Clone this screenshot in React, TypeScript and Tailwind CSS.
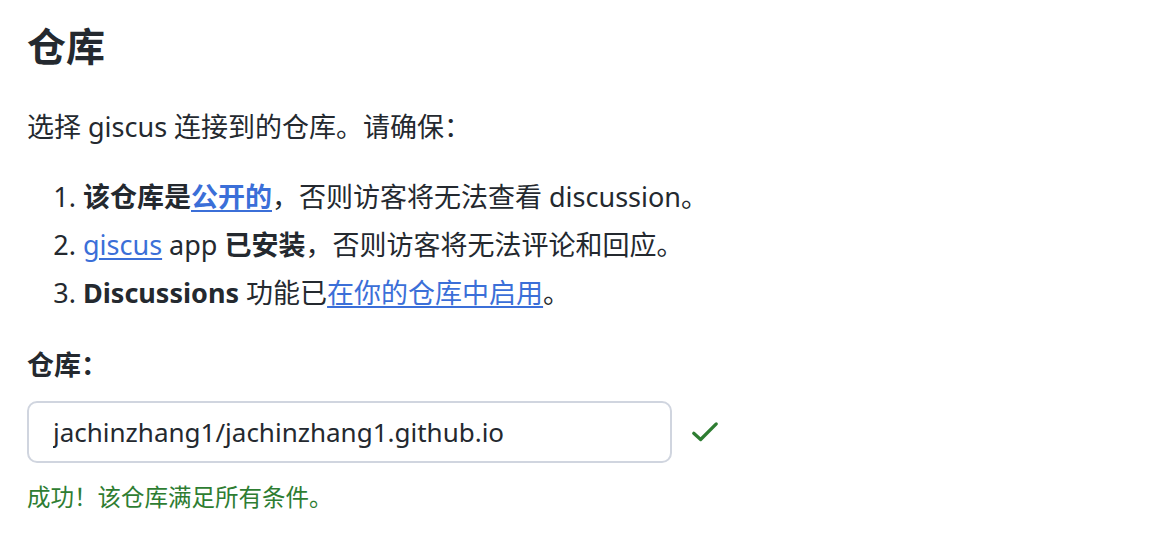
import React from 'react';

const font = { fontFamily: '"Noto Sans", "Noto Sans CJK SC", sans-serif' };

const A = ({ children, bold }: { children: React.ReactNode; bold?: boolean }) => (
  <a href="#" className={`text-[#3b6fd8] underline underline-offset-[3px] ${bold ? 'font-bold' : ''}`}>
    {children}
  </a>
);

export default function App() {
  return (
    <div className="min-h-screen bg-white text-[#24292f] px-[27px] pt-[20px]" style={font}>
      <h2 className="text-[39px] font-bold leading-[52px]">仓库</h2>

      <p className="text-[27px] leading-[40px] mt-[35px]">选择 giscus 连接到的仓库。请确保：</p>

      <ol className="list-decimal pl-[30px] ml-[26px] mt-[30px] text-[27px] leading-[40px] flex flex-col gap-[8px]">
        <li>
          <strong>该仓库是<A bold>公开的</A></strong>，否则访客将无法查看 discussion。
        </li>
        <li>
          <A>giscus</A> app <strong>已安装</strong>，否则访客将无法评论和回应。
        </li>
        <li>
          <strong>Discussions</strong> 功能已<A>在你的仓库中启用</A>。
        </li>
      </ol>

      <div className="mt-[32px]">
        <label className="block text-[27px] font-bold leading-[40px]">仓库：</label>
        <div className="flex items-center gap-[18px] mt-[16px]">
          <input
            readOnly
            value="jachinzhang1/jachinzhang1.github.io"
            className="w-[645px] h-[62px] border-2 border-[#d0d5df] rounded-[10px] px-[24px] text-[26px] text-[#24292f] outline-none"
            style={font}
          />
          <svg width="30" height="30" viewBox="0 0 24 24" fill="none" stroke="#2e7d32" strokeWidth="2.6" strokeLinecap="round" strokeLinejoin="round">
            <path d="M3 13l5.5 5L21 5.5" />
          </svg>
        </div>
        <p className="text-[23.5px] leading-[32px] text-[#2e7d32] mt-[18px]">成功！该仓库满足所有条件。</p>
      </div>
    </div>
  );
}
